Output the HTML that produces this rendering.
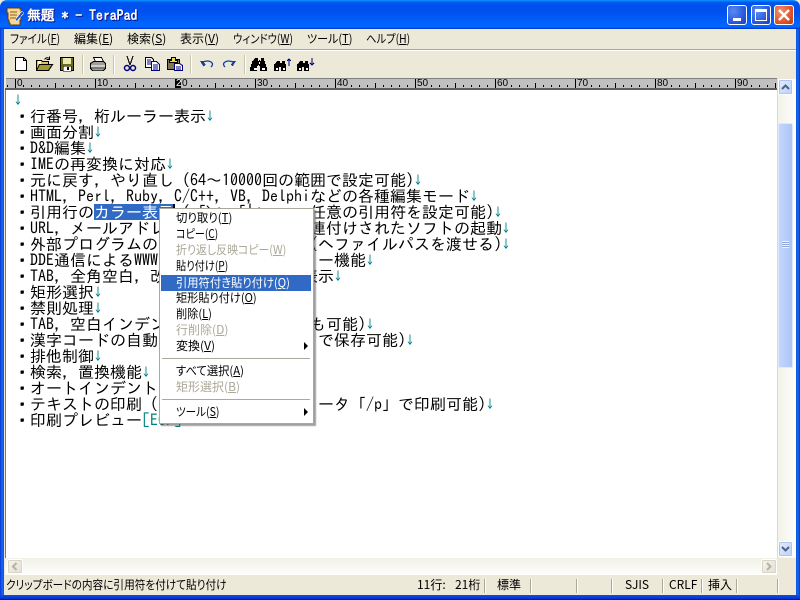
<!DOCTYPE html>
<html lang="ja"><head><meta charset="utf-8"><title>TeraPad</title>
<style>
*{margin:0;padding:0;box-sizing:border-box}
html,body{width:800px;height:600px;overflow:hidden;background:#0831d9}
.abs,.m,.mi,.st,.sep,.l{position:absolute}
#win{position:absolute;left:0;top:0;width:800px;height:600px;background:#ece9d8;overflow:hidden}
#title{left:0;top:0;width:800px;height:29px;border-radius:7px 7px 0 0;background:linear-gradient(180deg,#0997ff 0,#0053ee 9%,#0050ee 40%,#0066ff 85%,#0066ff 92%,#005bff 95%,#003dd7 97%,#003dd7 100%)}
#ttext{left:27px;top:7px;font:bold 13.8px/16px "IPAGothic","Liberation Sans",sans-serif;color:#fff;text-shadow:1px 1px 0 #0f1089;white-space:pre}
.bL,.bR,.bB{position:absolute;background:#0855dd}
.bL{left:0;top:29px;width:4px;height:571px;background:linear-gradient(90deg,#0831d9,#166aee 50%,#0855dd)}
.bR{right:0;top:29px;width:4px;height:571px;background:linear-gradient(90deg,#0855dd,#166aee 50%,#0831d9)}
.bB{left:0;top:595px;width:800px;height:5px;background:linear-gradient(180deg,#0855dd,#0831d9 70%,#00138c)}
.tb{position:absolute;top:5px;width:20px;height:20px;border:1px solid #fff;border-radius:3px;background:radial-gradient(circle at 30% 30%,#5a8cf0,#2a5ae0 60%,#1c3fc0)}
.tb.c{background:radial-gradient(circle at 30% 30%,#f09070,#e0552a 60%,#c03a10)}
.m{top:31px;font:12px/16px "Noto Sans CJK JP","Liberation Sans",sans-serif;font-feature-settings:"palt";color:#000;white-space:nowrap;transform-origin:0 50%}
#mline{left:4px;top:49px;width:792px;height:2px;background:linear-gradient(#aca899 50%,#fff 50%)}
.tsep{position:absolute;top:55px;width:2px;height:19px;background:linear-gradient(90deg,#c8c5b2 50%,#fff 50%)}
#ruler{left:6px;top:78px;width:771px;height:11px;background-color:#c0c0c0;border-top:1px solid #808080}
#rulerline{left:5px;top:88px;width:772px;height:2px;background:#5e5e5e}
#ticks{left:6px;top:79px;width:771px;height:9px;background-repeat:no-repeat;
background-image:
repeating-linear-gradient(90deg,transparent 0 9px,#000 9px 10px,transparent 10px 80px),
repeating-linear-gradient(90deg,transparent 0 49px,#000 49px 50px,transparent 50px 80px),
repeating-linear-gradient(90deg,transparent 0 1px,#000 1px 2px,transparent 2px 8px);
background-size:100% 9px,100% 5px,100% 2px;background-position:0 0,0 4px,0 6px}
.rn{position:absolute;top:79px;height:9px;padding:0 0 0 1px;font:10px/9px "Liberation Sans",sans-serif;color:#000;background:#c0c0c0}
#edit{left:5px;top:90px;width:772px;height:468px;background:#fff;border-left:1px solid #7a7a70}
#txt{left:14px;top:92px;width:763px;height:466px;overflow:hidden;font:16px/16px "IPAGothic",monospace;color:#000}
.l{left:0;white-space:pre;height:16px}
.l b{font-weight:bold;text-shadow:.5px 0 #000,0 .5px #000}
.l i{display:inline-block;width:8px;height:16px;font:normal 12px/16px "IPAGothic",monospace;color:#008080;text-indent:-2px;vertical-align:top}
.l span.r{position:absolute;top:0}
.s{background:#316ac5;color:#fff}
.t{color:#008080}
#vs{left:777px;top:79px;width:19px;height:479px;background:linear-gradient(90deg,#f3f2ea,#fdfdfa);border-left:1px solid #dcdad0}
#vthumb{position:absolute;left:0;top:44px;width:15px;height:245px;background:linear-gradient(90deg,#c5d5fb,#b7cdfa 50%,#aec4f5);border:1px solid #dfe8fd;border-radius:2px}
.sb{position:absolute;left:0;width:15px;height:16px;background:linear-gradient(135deg,#e3ecfe,#bcd0f8);border:1px solid #fff;border-radius:2px;box-shadow:0 0 0 1px #b0c4ee inset}
#hs{left:5px;top:558px;width:772px;height:17px;background:linear-gradient(180deg,#f1f0e8,#fefefb)}
.hb{position:absolute;top:1px;width:16px;height:15px;background:linear-gradient(135deg,#f4f3ee,#e4e1d3);border:1px solid #fff;border-radius:2px;box-shadow:0 0 0 1px #d8d5c6 inset}
#status{left:4px;top:575px;width:792px;height:20px;background:#ece9d8}
.st{top:578px;font:12px/14px "Noto Sans CJK JP","Liberation Sans",sans-serif;font-feature-settings:"palt";color:#000;white-space:nowrap;transform-origin:0 50%}
.sep{top:579px;width:2px;height:14px;background:linear-gradient(90deg,#aca899 50%,#fff 50%)}
#menu{left:159px;top:208px;width:155px;height:216px;background:#fff;border:1px solid #aca899;box-shadow:2px 2px 1px rgba(80,80,80,.55)}
.mi{left:16px;font:12px/16px "Noto Sans CJK JP","Liberation Sans",sans-serif;font-feature-settings:"palt";color:#000;white-space:nowrap;transform-origin:0 50%}
.d{color:#aca899}
#hl{left:1px;top:66px;width:150px;height:16px;background:#316ac5}
.ms{position:absolute;left:2px;width:148px;height:1px;background:#aca899}
.ar{position:absolute;left:144px;width:0;height:0;border-left:4px solid #000;border-top:4px solid transparent;border-bottom:4px solid transparent}
svg{position:absolute;left:0;top:0;shape-rendering:crispEdges}
</style></head><body>
<div id="win">
<div id="title" class="abs"></div>
<svg width="30" height="30" style="z-index:2">
<path d="M7 8h13v1h1v11h-1v5H10v-2H9v-3H8v-7H7z" fill="#f8d890" stroke="#5a3a10" stroke-width="1"/>
<path d="M10 12h7M10 15h7M10 18h6" stroke="#8a5a20" fill="none"/>
<path d="M15 20l7-9 2 2-7 8z" fill="#2050d0" stroke="#f0f0ff" stroke-width=".6"/>
</svg>
<div id="ttext" class="abs">無題 * - TeraPad</div>
<div class="tb" style="left:727px"><div class="abs" style="left:5px;top:12px;width:8px;height:3px;background:#fff"></div></div>
<div class="tb" style="left:751px"><div class="abs" style="left:3px;top:3px;width:12px;height:12px;border:1px solid #fff;border-top-width:3px"></div></div>
<div class="tb c" style="left:774px"><svg width="18" height="18" style="shape-rendering:auto"><path d="M4 4l10 10M14 4L4 14" stroke="#fff" stroke-width="2.4"/></svg></div>
<div class="bL"></div><div class="bR"></div><div class="bB"></div>

<div class="m" style="left:10px;transform:scaleX(.89)">ファイル(<u>F</u>)</div>
<div class="m" style="left:74px">編集(<u>E</u>)</div>
<div class="m" style="left:127px">検索(<u>S</u>)</div>
<div class="m" style="left:180px">表示(<u>V</u>)</div>
<div class="m" style="left:233px;transform:scaleX(.86)">ウィンドウ(<u>W</u>)</div>
<div class="m" style="left:307px;transform:scaleX(.92)">ツール(<u>T</u>)</div>
<div class="m" style="left:366px;transform:scaleX(.86)">ヘルプ(<u>H</u>)</div>
<div id="mline" class="abs"></div>

<div class="tsep" style="left:82px"></div>
<div class="tsep" style="left:113px"></div>
<div class="tsep" style="left:190px"></div>
<div class="tsep" style="left:244px"></div>
<svg width="340" height="80" style="z-index:2">
<g transform="translate(0 1)">
<!-- new -->
<path d="M15.500 56.500h8l3 3v10h-11z" fill="#fff" stroke="#000"/>
<path d="M23.500 56.500v3h3" fill="none" stroke="#000"/>
<!-- open -->
<path d="M36.500 59.500h5l1 1h6v9h-12z" fill="#d8c860" stroke="#000"/>
<path d="M36.500 69.500l3-6h13l-4 6z" fill="#a89830" stroke="#000"/>
<path d="M38 60h3v3h-3z" fill="#fffbb0"/>
<path d="M44.500 58.500q2-3 5-1M49.500 55.500v3h-3" fill="none" stroke="#000" style="shape-rendering:auto"/>
<!-- save -->
<rect x="60.500" y="56.500" width="13" height="13" fill="#6a6a18" stroke="#000"/>
<rect x="63" y="57" width="8" height="6" fill="#e8e8b0"/>
<rect x="63" y="65" width="8" height="5" fill="#fff" stroke="#000" stroke-width=".5"/>
<rect x="67" y="66" width="2" height="3" fill="#000"/>
<!-- print -->
<path d="M93.500 56.500h8l2 4h-8z" fill="#fff" stroke="#000"/>
<path d="M90.500 62.500l3-2h10l2 2v5l-2 2h-11l-2-2z" fill="#a0a098" stroke="#000"/>
<path d="M91 65h14" stroke="#fff"/><path d="M91 67h14" stroke="#505050"/>
<path d="M93 69h10v1H93z" fill="#404040"/>
</g>
<!-- cut -->
<path d="M127 56l3 9M133 56l-3 9" stroke="#000" fill="none"/>
<circle cx="127" cy="68" r="2.500" fill="none" stroke="#000080" stroke-width="1.500" style="shape-rendering:auto"/>
<circle cx="133" cy="68" r="2.500" fill="none" stroke="#000080" stroke-width="1.500" style="shape-rendering:auto"/>
<!-- copy -->
<path d="M145.500 57.500h6l2 2v8h-8z" fill="#fff" stroke="#000"/>
<path d="M147 60h4M147 62h4M147 64h4" stroke="#000080"/>
<path d="M151.500 61.500h5l3 3v6h-8z" fill="#fff" stroke="#000080"/>
<path d="M153 65h5M153 67h5M153 69h5" stroke="#000080"/>
<!-- paste -->
<path d="M167.500 59.500h12v10h-12z" fill="#807850" stroke="#000"/>
<path d="M171.500 57.500h4v3h2v2h-8v-2h2z" fill="#f0d850" stroke="#000"/>
<path d="M174.500 63.500h5l3 2v5h-8z" fill="#fff" stroke="#000080"/>
<path d="M176 67h5M176 69h5" stroke="#000080"/>
<!-- undo -->
<path d="M203 62q5-2 8 0t0 5" fill="none" stroke="#1040a0" stroke-width="1.300" style="shape-rendering:auto"/>
<path d="M200 61h5l-1.500 1.500 2 2-2 2z" fill="#1040a0"/>
<!-- redo -->
<path d="M233 62q-5-2-8 0t0 5" fill="none" stroke="#1040a0" stroke-width="1.300" style="shape-rendering:auto"/>
<path d="M236 61h-5l1.500 1.500-2 2 2 2z" fill="#1040a0"/>
<!-- binoculars -->
<path d="M255 58h3v3h1v-1h1v1h1v-3h3v3h1v3h1v3h1v4h-7v-5h-1v-1h-1v1h-1v5h-7v-4h1v-3h1v-3h1z" fill="#000"/>
<path d="M254 68h3v2h-3zM262 68h3v2h-3zM259 62h1v2h-1z" fill="#fff"/>
<path d="M277 61h3v2h2v-2h3v3h1v7h-5v-4h-2v4h-5v-7h1z" fill="#000"/>
<path d="M276 68h2v2h-2zM283 68h2v2h-2z" fill="#fff"/>
<path d="M289 66v-7M287 61l2-2 2 2" fill="none" stroke="#000080"/>
<path d="M300 61h3v2h2v-2h3v3h1v7h-5v-4h-2v4h-5v-7h1z" fill="#000"/>
<path d="M299 68h2v2h-2zM306 68h2v2h-2z" fill="#fff"/>
<path d="M312 58v7M310 63l2 2 2-2" fill="none" stroke="#000080"/>
</svg>

<div id="ruler" class="abs"></div>
<div id="ticks" class="abs"></div>
<div class="rn" style="left:16px">0</div>
<div class="rn" style="left:96px">10</div>
<div class="rn" style="left:175px;width:7px;background:#000;color:#fff">2</div>
<div class="rn" style="left:181px;padding-left:1px">0</div>
<div class="rn" style="left:256px">30</div>
<div class="rn" style="left:336px">40</div>
<div class="rn" style="left:416px">50</div>
<div class="rn" style="left:496px">60</div>
<div class="rn" style="left:576px">70</div>
<div class="rn" style="left:656px">80</div>
<div class="rn" style="left:736px">90</div>
<div id="rulerline" class="abs"></div>

<div id="edit" class="abs"></div>
<div id="txt" class="abs">
<div class="l" style="top:0"><i>↓</i></div>
<div class="l" style="top:16px"><b>・</b>行番号，桁ルーラー表示<i>↓</i></div>
<div class="l" style="top:32px"><b>・</b>画面分割<i>↓</i></div>
<div class="l" style="top:48px"><b>・</b>D&amp;D編集<i>↓</i></div>
<div class="l" style="top:64px"><b>・</b>IMEの再変換に対応<i>↓</i></div>
<div class="l" style="top:80px"><b>・</b>元に戻す，やり直し (64～10000回の範囲で設定可能)<i>↓</i></div>
<div class="l" style="top:96px"><b>・</b>HTML，Perl，Ruby，C/C++，VB，Delphiなどの各種編集モード<i>↓</i></div>
<div class="l" style="top:112px"><b>・</b>引用行の<span class="s">カラー表示</span> (「&gt;」「|」<span class="r" style="left:296px">任意の引用符を設定可能)<i>↓</i></span></div>
<div class="l" style="top:128px"><b>・</b>URL，メールアドレスの強調表示と，関連付けされたソフトの起動<i>↓</i></div>
<div class="l" style="top:144px"><b>・</b>外部プログラムの<span class="r" style="left:296px">(ヘファイルパスを渡せる)<i>↓</i></span></div>
<div class="l" style="top:160px"><b>・</b>DDE通信によるWWW<span class="r" style="left:304px">ー機能<i>↓</i></span></div>
<div class="l" style="top:176px"><b>・</b>TAB，全角空白，改<span class="r" style="left:288px">表示<i>↓</i></span></div>
<div class="l" style="top:192px"><b>・</b>矩形選択<i>↓</i></div>
<div class="l" style="top:208px"><b>・</b>禁則処理<i>↓</i></div>
<div class="l" style="top:224px"><b>・</b>TAB，空白インデン<span class="r" style="left:296px">も可能)<i>↓</i></span></div>
<div class="l" style="top:240px"><b>・</b>漢字コードの自動<span class="r" style="left:304px">で保存可能)<i>↓</i></span></div>
<div class="l" style="top:256px"><b>・</b>排他制御<i>↓</i></div>
<div class="l" style="top:272px"><b>・</b>検索，置換機能<i>↓</i></div>
<div class="l" style="top:288px"><b>・</b>オートインデント</div>
<div class="l" style="top:304px"><b>・</b>テキストの印刷 (コマンドラインパラメータ「/p」で印刷可能)<i>↓</i></div>
<div class="l" style="top:320px"><b>・</b>印刷プレビュー<span class="t">[EOF]</span></div>
</div>
<div class="abs" style="left:173px;top:204px;width:2px;height:16px;background:#000"></div>

<div id="vs" class="abs">
<div class="sb" style="top:0"><svg width="13" height="14" style="shape-rendering:auto"><path d="M3 9l3.500-3.500L10 9" fill="none" stroke="#4d6185" stroke-width="2"/></svg></div>
<div id="vthumb"><div class="abs" style="left:3px;top:117px;width:7px;height:7px;background:repeating-linear-gradient(#eef3ff 0 1px,#8fa8e0 1px 2px)"></div></div>
<div class="sb" style="top:462px"><svg width="13" height="14" style="shape-rendering:auto"><path d="M3 5l3.500 3.500L10 5" fill="none" stroke="#4d6185" stroke-width="2"/></svg></div>
</div>
<div id="hs" class="abs">
<div class="hb" style="left:2px"><svg width="14" height="13" style="shape-rendering:auto"><path d="M8.500 3L5 6.500 8.500 10" fill="none" stroke="#b5b3a6" stroke-width="2"/></svg></div>
<div class="hb" style="left:756px"><svg width="14" height="13" style="shape-rendering:auto"><path d="M5 3l3.500 3.500L5 10" fill="none" stroke="#b5b3a6" stroke-width="2"/></svg></div>
</div>

<div id="status" class="abs"></div>
<div class="st" style="left:6px;transform:scaleX(.887)">クリップボードの内容に引用符を付けて貼り付け</div>
<div class="st" style="left:417px">11行:</div>
<div class="st" style="left:455px">21桁</div>
<div class="st" style="left:497px">標準</div>
<div class="st" style="left:625px">SJIS</div>
<div class="st" style="left:669px">CRLF</div>
<div class="st" style="left:708px">挿入</div>
<div class="sep" style="left:484px"></div>
<div class="sep" style="left:530px"></div>
<div class="sep" style="left:576px"></div>
<div class="sep" style="left:611px"></div>
<div class="sep" style="left:662px"></div>
<div class="sep" style="left:701px"></div>
<div class="sep" style="left:736px"></div>
<div class="sep" style="left:777px"></div>

<div id="menu" class="abs">
<div id="hl" class="abs"></div>
<div class="mi" style="top:1px;transform:scaleX(.95)">切り取り(<u>T</u>)</div>
<div class="mi" style="top:17px;transform:scaleX(.84)">コピー(<u>C</u>)</div>
<div class="mi d" style="top:33px;transform:scaleX(.91)">折り返し反映コピー(<u>W</u>)</div>
<div class="mi" style="top:49px;transform:scaleX(.85)">貼り付け(<u>P</u>)</div>
<div class="mi" style="top:66px;color:#fff;transform:scaleX(.94)">引用符付き貼り付け(<u>Q</u>)</div>
<div class="mi" style="top:81px;transform:scaleX(.93)">矩形貼り付け(<u>O</u>)</div>
<div class="mi" style="top:97px;transform:scaleX(.93)">削除(<u>L</u>)</div>
<div class="mi d" style="top:113px">行削除(<u>D</u>)</div>
<div class="mi" style="top:129px">変換(<u>V</u>)</div>
<div class="ar" style="top:133px"></div>
<div class="ms" style="top:149px"></div>
<div class="mi" style="top:154px;transform:scaleX(.94)">すべて選択(<u>A</u>)</div>
<div class="mi d" style="top:170px">矩形選択(<u>B</u>)</div>
<div class="ms" style="top:190px"></div>
<div class="mi" style="top:195px;transform:scaleX(.88)">ツール(<u>S</u>)</div>
<div class="ar" style="top:199px"></div>
</div>
</div>
</body></html>
